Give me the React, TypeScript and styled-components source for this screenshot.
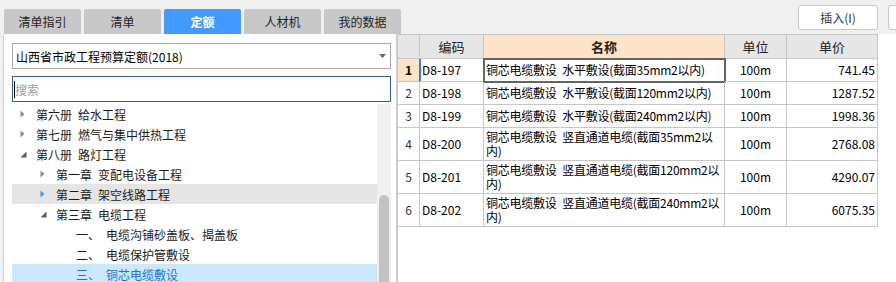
import styled, { createGlobalStyle } from "styled-components";

const GlobalStyle = createGlobalStyle`
  *, *::before, *::after {
    box-sizing: border-box;
  }
  html, body {
    margin: 0;
    padding: 0;
    background: #f0f0f0;
    overflow: hidden;
  }
  body {
    font-family: "Noto Sans CJK SC", "Liberation Sans", sans-serif;
    font-size: 12px;
    color: #1b1b1b;
  }
`;

const Screen = styled.div`
  display: flex;
  width: 896px;
  height: 282px;
  padding-left: 3px;
  overflow: hidden;
`;

/* ---------- left side: tabs + tree ---------- */

const LeftPane = styled.div`
  flex: 0 0 394px;
  display: flex;
  flex-direction: column;
  min-width: 0;
`;

const TabBar = styled.div`
  display: flex;
  gap: 3px;
  height: 34px;
  padding: 9px 0 0 1px;
`;

const Tab = styled.div<{ $active?: boolean }>`
  flex: 0 0 77px;
  height: 25px;
  display: flex;
  align-items: center;
  justify-content: center;
  border-radius: 2px 2px 0 0;
  background: ${(p) => (p.$active ? "#4499ff" : "#c8c8c8")};
  color: ${(p) => (p.$active ? "#fff" : "#1e1e1e")};
  font-weight: ${(p) => (p.$active ? 700 : 400)};
  font-size: 12px;
`;

const Panel = styled.div`
  flex: 1;
  display: flex;
  flex-direction: column;
  min-height: 0;
  background: #fff;
  border-left: 1px solid #d0d0d0;
  border-right: 1px solid #d0d0d0;
  padding: 9px 5px 0 8px;
`;

const Combo = styled.div`
  height: 26px;
  display: flex;
  align-items: center;
  justify-content: space-between;
  padding: 0 4px 0 3px;
  border: 1px solid #a9a9a9;
  font-size: 12px;
  color: #000;
`;

const SearchBox = styled.div`
  margin-top: 7px;
  height: 26px;
  display: flex;
  align-items: center;
  padding-left: 1px;
  border: 1px solid #2b5fa8;
  color: #a0a0a0;
  font-size: 12px;

  &::before {
    content: "";
    width: 1px;
    height: 17px;
    background: #000;
  }
`;

const TreeWrap = styled.div`
  margin-top: 2px;
  flex: 1;
  display: flex;
  min-height: 0;
  overflow: hidden;
`;

const TreeList = styled.div`
  flex: 1;
  min-width: 0;
`;

const TreeRow = styled.div<{ $level: number; $hover?: boolean; $selected?: boolean }>`
  height: 20px;
  display: flex;
  align-items: center;
  padding-left: ${(p) => p.$level * 20}px;
  background: ${(p) => (p.$selected ? "#cce8ff" : p.$hover ? "#e5e5e5" : "transparent")};
  color: ${(p) => (p.$selected ? "#1a73d9" : "#1b1b1b")};
  white-space: nowrap;
  font-size: 12px;
`;

const Toggle = styled.span`
  flex: 0 0 24px;
  height: 20px;
  display: flex;
  align-items: center;
  padding-left: 8px;
`;

const ScrollTrack = styled.div`
  flex: 0 0 14px;
  display: flex;
  flex-direction: column;
  align-items: center;
  background: #f0f0f0;
  padding-top: 4px;
`;

const ScrollThumb = styled.div<{ $offset: number }>`
  width: 10px;
  height: 140px;
  margin-top: ${(p) => p.$offset}px;
  border-radius: 5px;
  background: #c2c2c2;
  flex-shrink: 0;
`;

/* ---------- right side: toolbar + grid ---------- */

const RightPane = styled.div`
  flex: 1;
  display: flex;
  flex-direction: column;
  min-width: 0;
`;

const Toolbar = styled.div`
  height: 34px;
  flex-shrink: 0;
  display: flex;
  gap: 10px;
  padding: 5px 0 0 401px;
  overflow: hidden;
`;

const ToolButton = styled.button`
  flex: 0 0 80px;
  height: 25px;
  padding: 0;
  border: 1px solid #c8c8c8;
  border-radius: 3px;
  background: #fff;
  font: inherit;
  font-size: 12px;
  color: #333;
`;

const GridArea = styled.div`
  flex: 1;
  background: #fff;
  border-left: 1px solid #c8c8c8;
`;

const Grid = styled.div`
  display: grid;
  grid-template-columns: 22px 64px 241px 62px 91px;
  width: max-content;
  border-top: 1px solid #c6c6c6;
`;

type Align = "left" | "center" | "right";
const justify = { left: "flex-start", center: "center", right: "flex-end" };

const Cell = styled.div<{ $align?: Align; $h: number }>`
  height: ${(p) => p.$h}px;
  display: flex;
  align-items: center;
  justify-content: ${(p) => justify[p.$align || "left"]};
  padding: 0 2px;
  border-right: 1px solid #c6c6c6;
  border-bottom: 1px solid #c6c6c6;
  font-size: 12px;
  line-height: 14px;
  color: #000;
  white-space: pre;
  overflow: hidden;
`;

const HeadCell = styled(Cell)<{ $accent?: boolean }>`
  background: ${(p) => (p.$accent ? "#fde4c7" : "#e6e6e6")};
  font-weight: ${(p) => (p.$accent ? 700 : 400)};
  font-size: 13px;
  color: #222;
`;

const RowNo = styled(Cell)<{ $current?: boolean }>`
  background: ${(p) => (p.$current ? "#fde4c7" : "#fff")};
  font-weight: ${(p) => (p.$current ? 700 : 400)};
  color: ${(p) => (p.$current ? "#000" : "#333")};
  border-right-color: ${(p) => (p.$current ? "#2f7fe6" : "#c6c6c6")};
`;

const CodeCell = styled(Cell)<{ $current?: boolean }>`
  box-shadow: ${(p) => (p.$current ? "inset 1px 0 0 #2f7fe6" : "none")};
`;

const NameCell = styled(Cell)<{ $focused?: boolean }>`
  letter-spacing: -0.25px;
  overflow: visible;
  outline: ${(p) => (p.$focused ? "2px solid #646464" : "none")};
  outline-offset: -1px;
`;

/* ---------- icons ---------- */

function Arrow({ state, color }: { state: "collapsed" | "expanded"; color?: string }) {
  if (state === "expanded") {
    return (
      <svg width="7" height="8" viewBox="0 0 7 8">
        <polygon points="6.5,1.5 6.5,7.5 0.5,7.5" fill={color || "#5c5c5c"} />
      </svg>
    );
  }
  return (
    <svg width="6" height="8" viewBox="0 0 6 8">
      <polygon points="0.5,0.5 4.5,4 0.5,7.5" fill={color || "#8e8e8e"} />
    </svg>
  );
}

function DropArrow() {
  return (
    <svg width="7" height="4" viewBox="0 0 7 4">
      <polygon points="0,0 7,0 3.5,4" fill="#6a6a6a" />
    </svg>
  );
}

function UpArrow() {
  return (
    <svg width="8" height="4" viewBox="0 0 8 4">
      <polygon points="0,4 8,4 4,0" fill="#606060" />
    </svg>
  );
}

/* ---------- data ---------- */

const tabs = ["清单指引", "清单", "定额", "人材机", "我的数据"];

type Node = {
  level: number;
  label: string;
  state: "collapsed" | "expanded" | "leaf";
  hover?: boolean;
  selected?: boolean;
};

const nodes: Node[] = [
  { level: 0, label: "第六册\u2002给水工程", state: "collapsed" },
  { level: 0, label: "第七册\u2002燃气与集中供热工程", state: "collapsed" },
  { level: 0, label: "第八册\u2002路灯工程", state: "expanded" },
  { level: 1, label: "第一章\u2002变配电设备工程", state: "collapsed" },
  { level: 1, label: "第二章\u2002架空线路工程", state: "collapsed", hover: true },
  { level: 1, label: "第三章\u2002电缆工程", state: "expanded" },
  { level: 2, label: "一、\u2002电缆沟铺砂盖板、揭盖板", state: "leaf" },
  { level: 2, label: "二、\u2002电缆保护管敷设", state: "leaf" },
  { level: 2, label: "三、\u2002铜芯电缆敷设", state: "leaf", selected: true },
];

const quotas = [
  { code: "D8-197", name: "铜芯电缆敷设\u2002水平敷设(截面35mm2以内)", unit: "100m", price: "741.45" },
  { code: "D8-198", name: "铜芯电缆敷设\u2002水平敷设(截面120mm2以内)", unit: "100m", price: "1287.52" },
  { code: "D8-199", name: "铜芯电缆敷设\u2002水平敷设(截面240mm2以内)", unit: "100m", price: "1998.36" },
  { code: "D8-200", name: "铜芯电缆敷设\u2002竖直通道电缆(截面35mm2以\n内)", unit: "100m", price: "2768.08" },
  { code: "D8-201", name: "铜芯电缆敷设\u2002竖直通道电缆(截面120mm2以\n内)", unit: "100m", price: "4290.07" },
  { code: "D8-202", name: "铜芯电缆敷设\u2002竖直通道电缆(截面240mm2以\n内)", unit: "100m", price: "6075.35" },
];

export default function App() {
  const current = 0;
  return (
    <>
      <GlobalStyle />
      <Screen>
        <LeftPane>
          <TabBar>
            {tabs.map((t) => (
              <Tab key={t} $active={t === "定额"}>
                {t}
              </Tab>
            ))}
          </TabBar>
          <Panel>
            <Combo>
              <span>山西省市政工程预算定额(2018)</span>
              <DropArrow />
            </Combo>
            <SearchBox>搜索</SearchBox>
            <TreeWrap>
              <TreeList>
                {nodes.map((n) => (
                  <TreeRow key={n.label} $level={n.level} $hover={n.hover} $selected={n.selected}>
                    <Toggle>
                      {n.state !== "leaf" && (
                        <Arrow state={n.state} color={n.hover ? "#3c96ff" : undefined} />
                      )}
                    </Toggle>
                    <span>{n.label}</span>
                  </TreeRow>
                ))}
              </TreeList>
              <ScrollTrack>
                <UpArrow />
                <ScrollThumb $offset={87} />
              </ScrollTrack>
            </TreeWrap>
          </Panel>
        </LeftPane>

        <RightPane>
          <Toolbar>
            <ToolButton>插入(I)</ToolButton>
            <ToolButton aria-label="更多" />
          </Toolbar>
          <GridArea>
            <Grid>
              <HeadCell $h={24} />
              <HeadCell $h={24} $align="center">编码</HeadCell>
              <HeadCell $h={24} $align="center" $accent>名称</HeadCell>
              <HeadCell $h={24} $align="center">单位</HeadCell>
              <HeadCell $h={24} $align="center">单价</HeadCell>
              {quotas.map((q, i) => {
                const h = q.name.includes("\n") ? 33 : 23;
                const isCur = i === current;
                return [
                  <RowNo key={q.code + "n"} $h={h} $align="center" $current={isCur}>
                    {i + 1}
                  </RowNo>,
                  <CodeCell key={q.code + "c"} $h={h} $current={isCur}>
                    {q.code}
                  </CodeCell>,
                  <NameCell key={q.code + "m"} $h={h} $focused={isCur}>
                    {q.name}
                  </NameCell>,
                  <Cell key={q.code + "u"} $h={h} $align="center">
                    {q.unit}
                  </Cell>,
                  <Cell key={q.code + "p"} $h={h} $align="right">
                    {q.price}
                  </Cell>,
                ];
              })}
            </Grid>
          </GridArea>
        </RightPane>
      </Screen>
    </>
  );
}
